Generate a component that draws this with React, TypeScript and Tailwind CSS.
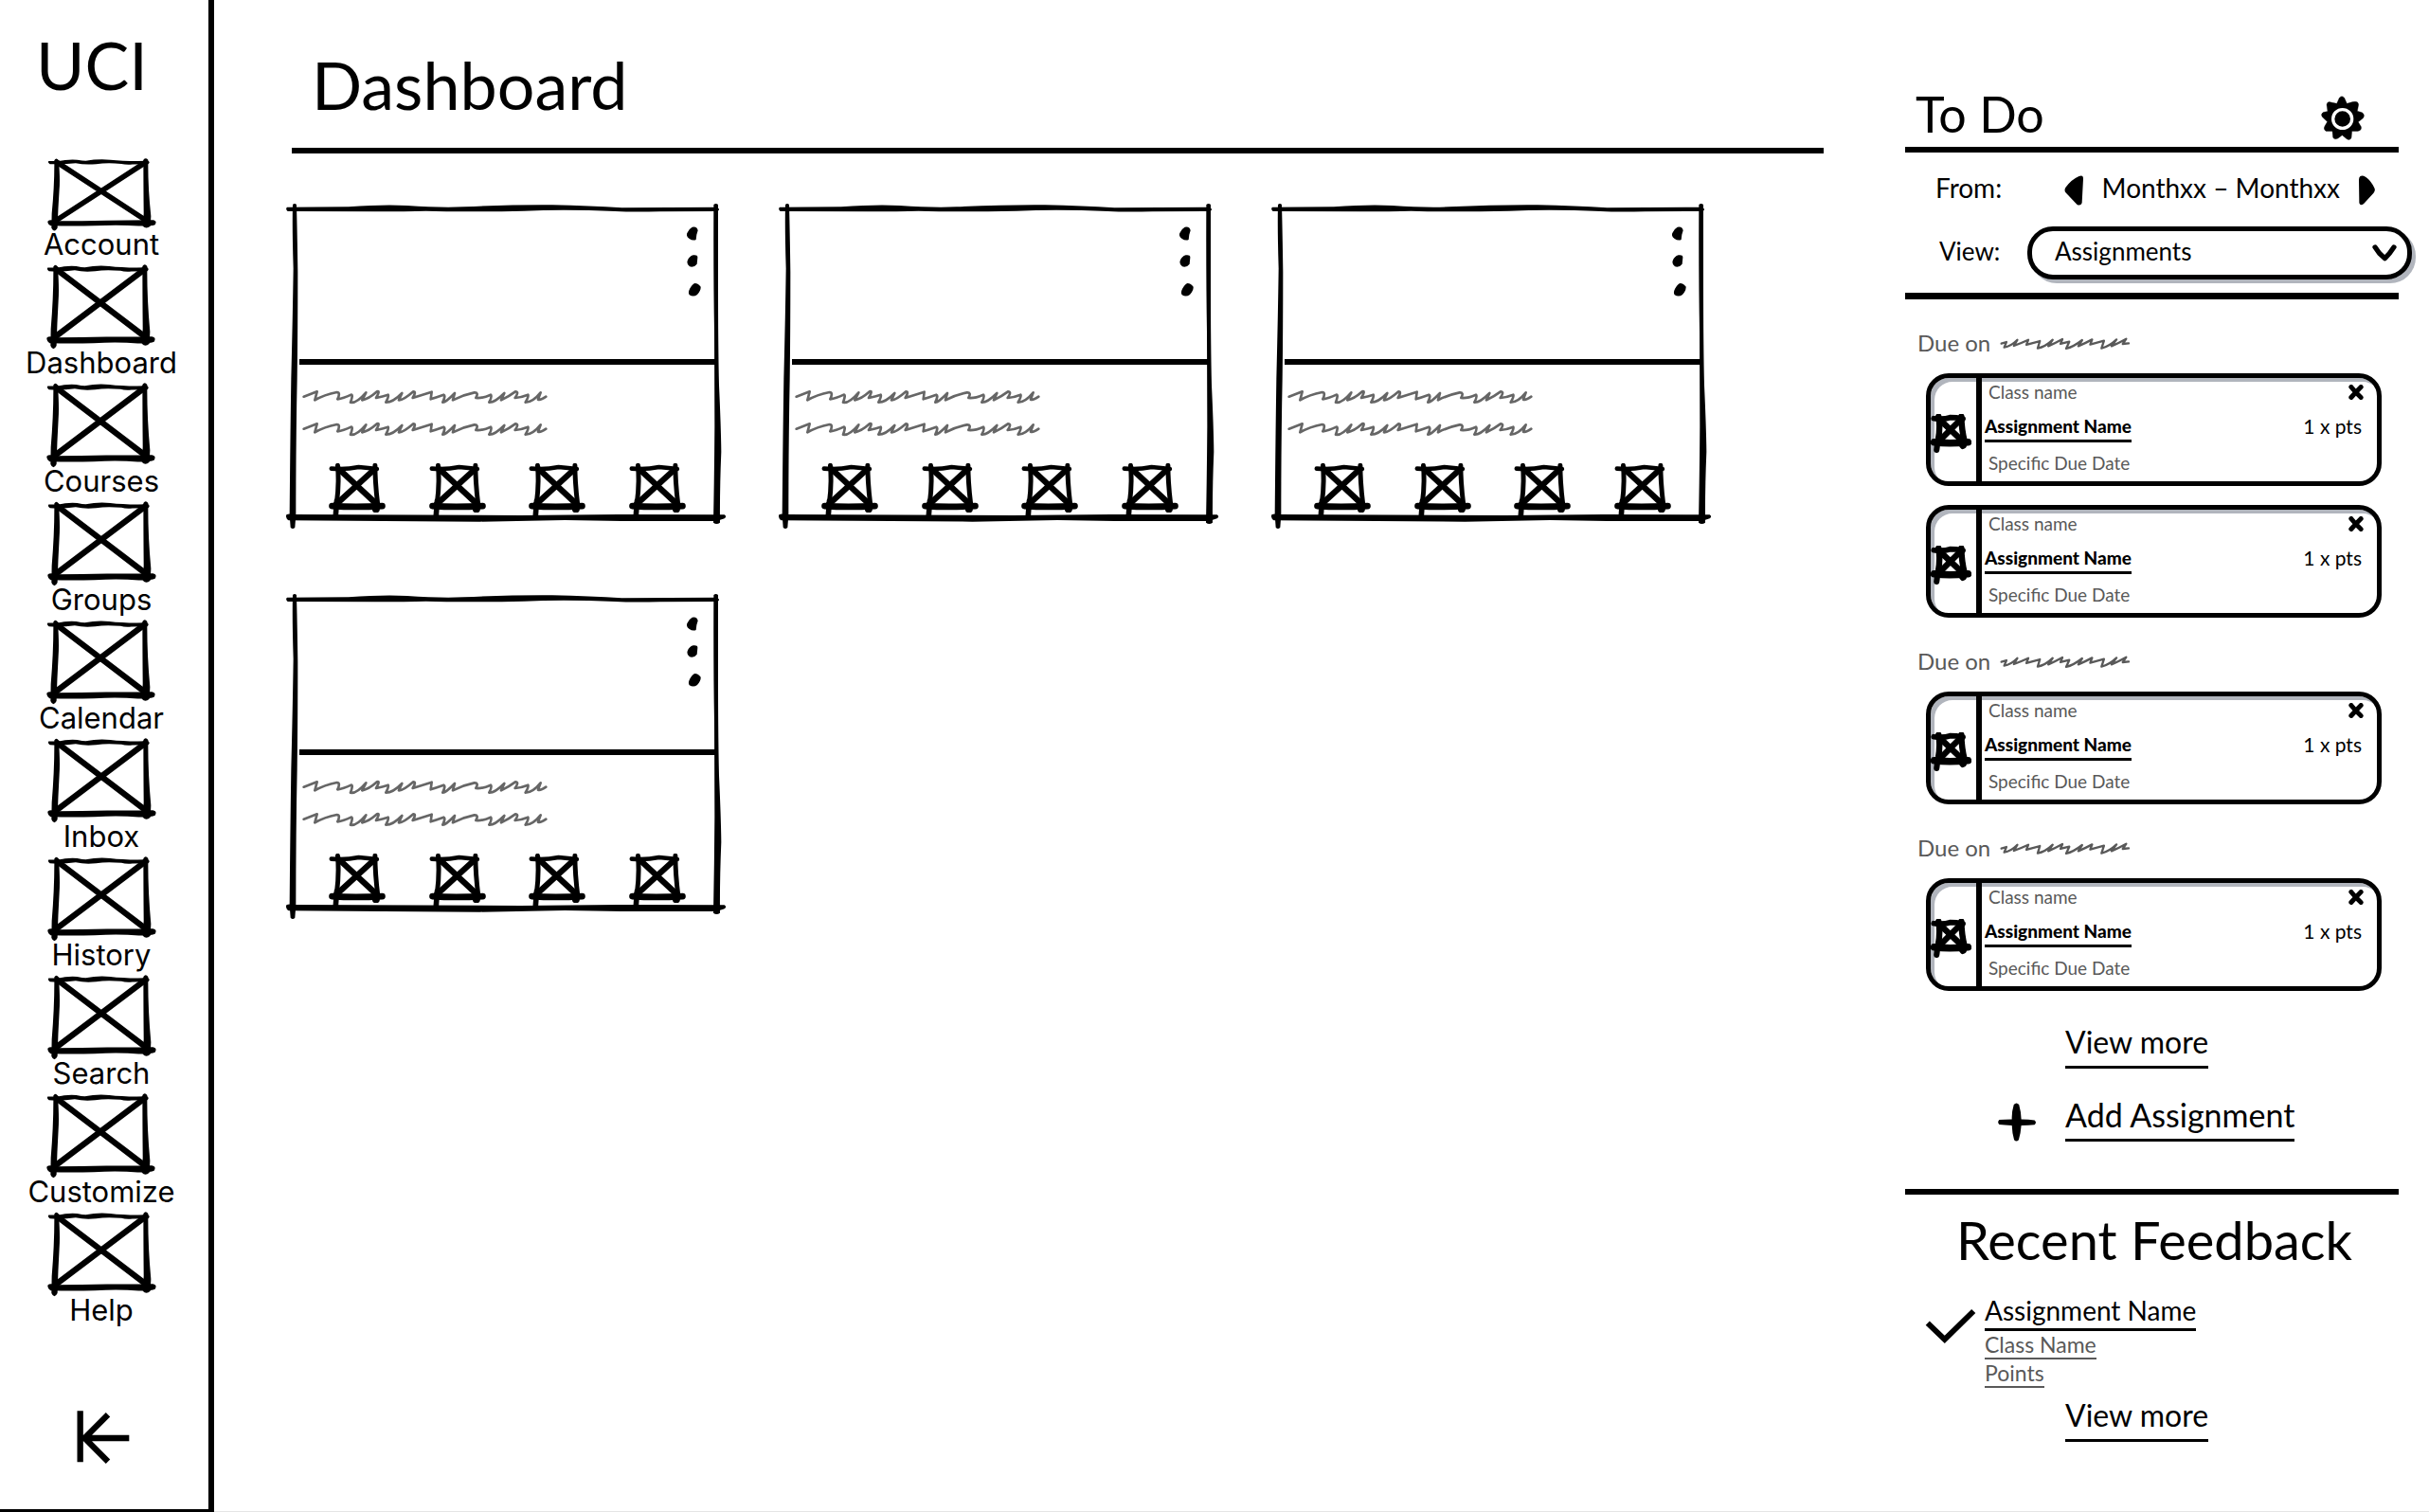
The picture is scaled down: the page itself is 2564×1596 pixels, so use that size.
import React from "react";

const navItems = ["Account", "Dashboard", "Courses", "Groups", "Calendar", "Inbox", "History", "Search", "Customize", "Help"];
const courses = ["Course 1", "Course 2", "Course 3", "Course 4"];
const dueGroups = [
  { id: "a", count: 2 },
  { id: "b", count: 1 },
  { id: "c", count: 1 },
];

function NavSketch({ short }: { short: boolean }) {
  return (
    <svg
      viewBox="150 82 346 278"
      preserveAspectRatio="none"
      className={short ? "h-[78px] w-[115px]" : "h-[91px] w-[115px]"}
      aria-hidden="true"
    >
      <path d="M154 93 L186 93 Q210 86 245 88 Q262 92 272 92 Q310 84 350 88 Q400 94 470 92 Q478 98 470 104 L420 105 Q400 107 385 103 Q340 98 305 104 Q270 108 240 101 Q200 106 158 104 Q150 98 154 93Z" />
      <path d="M172 90 Q178 78 186 90 Q191 160 188 200 Q184 270 182 345 Q172 365 163 345 L164 290 Q173 180 172 90Z" />
      <path d="M455 88 Q462 78 470 88 Q469 190 479 300 L477 338 Q464 350 453 338 L456 290 Q455 180 455 88Z" />
      <path d="M152 318 Q158 312 180 318 Q260 318 340 316 Q400 316 485 315 Q500 318 492 332 Q480 338 440 337 Q380 332 300 336 Q230 338 160 336 Q148 328 152 318Z" />
      <path d="M180 97 L467 319 M463 97 L174 319" stroke="black" strokeWidth="19" fill="none" />
    </svg>
  );
}

function SmallSketch() {
  return (
    <svg viewBox="173 865 180 172" className="h-[57px] w-[60px]" fill="none" stroke="black" strokeLinecap="round" aria-hidden="true">
      <path d="M181 882 Q225 886 268 877 Q300 880 326 883" strokeWidth="14" />
      <path d="M201 872 Q206 930 198 990" strokeWidth="15" />
      <path d="M198 985 L194 1040" strokeWidth="17" />
      <path d="M320 872 Q320 930 329 1000" strokeWidth="15" />
      <path d="M183 1001 Q255 1006 343 1001" strokeWidth="20" />
      <path d="M322 1011 L324 1011" strokeWidth="22" />
      <path d="M208 886 L326 996 M316 886 L196 996" strokeWidth="19" />
    </svg>
  );
}

function TinySketch() {
  return (
    <svg viewBox="0 0 126 121" className="h-[41px] w-[43px]" fill="none" stroke="black" strokeLinecap="round" aria-hidden="true">
      <path d="M9 14 Q40 18 60 11 Q80 11 100 15" strokeWidth="17" />
      <path d="M24 8 Q30 40 23 80" strokeWidth="19" />
      <path d="M22 80 L18 112" strokeWidth="18" />
      <path d="M95 8 Q96 50 105 85" strokeWidth="19" />
      <path d="M10 88 Q55 93 116 88" strokeWidth="22" />
      <path d="M98 95 L100 98" strokeWidth="22" />
      <path d="M32 22 L98 84 M88 22 L26 84" strokeWidth="19" />
    </svg>
  );
}

function CardFrame() {
  return (
    <svg viewBox="37 45 1395 1029" preserveAspectRatio="none" className="pointer-events-none absolute inset-0 h-full w-full" aria-hidden="true">
      <path d="M40 56 L235 55 Q350 46 420 51 Q520 58 600 55 Q750 48 880 49 Q1000 52 1100 58 L1400 56 Q1415 62 1403 69 L1220 70 Q1130 72 1080 69 Q920 62 790 68 Q600 72 480 68 Q420 70 320 70 L42 69 Q34 62 40 56Z" />
      <path d="M58 48 Q64 42 70 48 Q72 120 74 260 Q74 450 72 600 Q68 800 68 1030 L65 1070 Q58 1078 51 1070 L48 1030 Q50 800 53 600 Q58 400 60 250 Q56 120 58 48Z" />
      <path d="M1391 48 Q1398 42 1405 48 L1405 300 Q1405 500 1408 620 Q1414 750 1415 830 Q1410 950 1411 1055 Q1400 1063 1390 1055 Q1393 900 1394 750 L1393 450 Q1390 280 1391 48Z" />
      <path d="M38 1030 Q45 1025 60 1029 L780 1032 L1090 1029 L1425 1030 Q1434 1036 1425 1042 L1400 1050 L1100 1050 L920 1047 L650 1052 L45 1048 Q34 1040 38 1030Z" />
    </svg>
  );
}

function Squiggle() {
  return (
    <svg viewBox="90 633 777 48" className="h-4 w-[259px]" fill="none" stroke="#666666" strokeWidth="8" strokeLinecap="round" strokeLinejoin="round" aria-hidden="true">
      <path d="M95 656 L137 640 L130 667 Q160 650 200 642 Q212 642 202 664 Q220 662 245 650 Q252 650 243 674 Q262 678 292 643 L280 667 Q300 664 327 640 Q338 636 324 660 Q345 655 362 650 Q365 655 355 674 Q378 674 406 645 L396 667 Q410 668 442 640 Q452 640 440 660 L500 641 L497 664 Q515 658 538 650 Q545 652 535 674 Q545 674 573 645 L567 667 Q600 650 635 643 Q650 642 640 660 Q660 662 687 650 Q692 655 682 674 Q700 675 730 645 L720 667 Q745 655 765 640 Q778 640 764 660 Q785 658 805 650 Q808 655 797 674 Q820 674 845 643 L837 665 Q845 668 862 656" />
    </svg>
  );
}

function DateSquiggle() {
  return (
    <svg viewBox="305 830 418 45" className="h-[15px] w-[138px]" fill="none" stroke="#595959" strokeWidth="7" strokeLinecap="round" strokeLinejoin="round" aria-hidden="true">
      <path d="M310 853 L326 848 L319 865 Q340 862 361 841 L350 860 Q372 852 396 841 L390 857 L433 845 L426 868 Q450 864 474 841 L460 861 Q482 852 505 839 L499 854 L527 847 L517 869 Q540 864 568 842 L556 861 Q578 852 600 840 L594 856 L638 844 L630 868 Q655 862 678 840 L662 861 Q684 852 709 838 L698 854 L717 852" />
    </svg>
  );
}

function CourseCard({ name }: { name: string }) {
  return (
    <article aria-label={name} className="relative flex h-[343px] flex-col">
      <CardFrame />
      <div className="flex h-[164px] justify-end pt-6 pr-[27px]">
        <button aria-label={`${name} options`} className="relative h-[74px] w-[15px]">
          <svg viewBox="1305 117 45 222" className="h-[74px] w-[15px]" aria-hidden="true">
            <path d="M1322 119 Q1338 116 1340 130 L1336 143 L1334 159 Q1324 164 1312 155 Q1302 148 1306 138 Q1312 124 1322 119Z" />
            <path d="M1325 208 Q1340 206 1339 216 L1337 236 Q1328 248 1314 244 Q1304 238 1307 226 Q1312 212 1325 208Z" />
            <path d="M1330 297 Q1342 298 1349 308 Q1350 320 1338 333 Q1326 342 1313 334 Q1308 326 1314 315 Q1322 300 1330 297Z" />
          </svg>
        </button>
      </div>
      <hr className="mr-3 ml-[14px] border-0 border-t-[6px] border-black" />
      <div className="flex flex-col gap-[18px] pt-[26px] pl-[17px]">
        <Squiggle />
        <Squiggle />
      </div>
      <div className="mt-auto flex justify-between pr-[43px] pb-3 pl-[45px]">
        {["Announcements", "Tasks", "Discussions", "Files"].map((a) => (
          <button key={a} aria-label={a} className="relative">
            <SmallSketch />
          </button>
        ))}
      </div>
    </article>
  );
}

function AssignmentCard() {
  return (
    <li className="flex h-[119px] w-[481px] overflow-hidden rounded-[24px] border-[5px] border-black shadow-[inset_4px_4px_0_0_#b1b5bd]">
      <div className="flex w-[54px] shrink-0 items-center border-r-[6px] border-black pt-2">
        <TinySketch />
      </div>
      <div className="flex flex-1 flex-col gap-2 pt-px pl-[3px] text-[19px] leading-7">
        <div className="flex items-start justify-between pr-[14px] pl-1">
          <span className="text-[#595959]">Class name</span>
          <button aria-label="Dismiss" className="pt-[6px]">
            <svg viewBox="0 0 45 45" className="h-4 w-4" fill="none" stroke="black" strokeWidth="14" strokeLinecap="round" aria-hidden="true">
              <path d="M8 7 Q20 22 37 38 M37 7 Q24 20 8 38" />
            </svg>
          </button>
        </div>
        <div className="flex items-start justify-between pr-4">
          <a href="#assignment" className="border-b-[3px] border-black font-black">
            Assignment Name
          </a>
          <span className="text-[21px]">1 x pts</span>
        </div>
        <span className="pl-1 text-[#595959]">Specific Due Date</span>
      </div>
    </li>
  );
}

function ViewMore() {
  return (
    <a href="#more" className="border-b-[3px] border-black text-[32px] leading-[50px]">
      View more
    </a>
  );
}

function ToDo() {
  return (
    <section>
      <div className="mr-8 flex items-end justify-between border-b-[6px] border-black pr-9 pb-[7px] pl-[11px]">
        <h2 className="text-[52px] leading-[56px]">To Do</h2>
        <button aria-label="To do settings">
          <svg viewBox="1322 65 138 142" preserveAspectRatio="none" className="h-[47px] w-[46px]" aria-hidden="true">
            <path
              d="M1380 72 Q1388 62 1396 72 L1404 90 L1422 85 Q1440 80 1441 94 L1437 114 L1452 119 Q1463 126 1455 137 L1440 149 L1449 164 Q1452 176 1438 178 L1420 178 L1418 200 Q1411 210 1402 202 L1389 191 L1376 201 Q1364 207 1360 198 L1358 178 L1338 178 Q1328 172 1334 162 L1342 148 L1327 134 Q1319 124 1329 118 L1343 115 L1340 94 Q1342 82 1354 86 L1372 90Z"
              stroke="black"
              strokeWidth="1"
              strokeLinejoin="round"
            />
            <circle cx="1390" cy="139" r="30" fill="black" stroke="white" strokeWidth="10" />
          </svg>
        </button>
      </div>

      <div className="mr-[18px] pt-[19px] pb-[14px]">
        <div className="flex items-start pr-[39px] pl-8 text-[28px] leading-9">
          <span>From:</span>
          <div className="ml-auto flex items-start gap-5">
            <button aria-label="Earlier" className="pt-[5px]">
              <svg viewBox="503 315 59 97" preserveAspectRatio="none" className="h-8 w-5" aria-hidden="true">
                <path d="M549 318 Q562 312 562 326 L558 404 Q554 414 543 409 L508 371 Q501 363 508 353 Q526 328 549 318Z" />
              </svg>
            </button>
            <span>Monthxx – Monthxx</span>
            <button aria-label="Later" className="pt-[5px]">
              <svg viewBox="0 0 46 96" preserveAspectRatio="none" className="h-8 w-[17px]" aria-hidden="true">
                <path d="M4 3 Q10 -1 20 6 Q34 16 44 40 Q48 48 42 56 L14 90 Q4 98 1 88 L0 14 Q0 6 4 3Z" />
              </svg>
            </button>
          </div>
        </div>
        <div className="mt-[22px] flex items-center justify-between pl-9 text-[26px] leading-8">
          <label htmlFor="view" className="pb-1">
            View:
          </label>
          <div className="relative">
            <select
              id="view"
              className="h-14 w-[406px] appearance-none rounded-[27px] border-[5px] border-black bg-white pb-1 pl-6 shadow-[4px_4px_0_0_#b1b5bd]"
            >
              <option>Assignments</option>
            </select>
            <svg viewBox="0 0 68 50" preserveAspectRatio="none" className="pointer-events-none absolute top-[19px] right-4 h-[18px] w-[26px]" fill="none" stroke="black" strokeWidth="14" strokeLinecap="round" strokeLinejoin="round" aria-hidden="true">
              <path d="M8 8 L20 26 L35 41 L48 26 L60 8" />
            </svg>
          </div>
        </div>
      </div>
      <hr className="mr-8 border-0 border-t-[7px] border-black" />

      <div className="flex flex-col gap-[30px] pt-[30px]">
        {dueGroups.map((g) => (
          <div key={g.id}>
            <h3 className="flex items-center gap-[10px] pb-4 pl-[13px] text-[24px] leading-8 text-[#595959]">
              Due on <DateSquiggle />
            </h3>
            <ul className="flex flex-col gap-5 pl-[22px]">
              {Array.from({ length: g.count }, (_, i) => (
                <AssignmentCard key={i} />
              ))}
            </ul>
          </div>
        ))}
      </div>

      <div className="flex flex-col items-start gap-6 pt-[29px] pb-[50px] pl-[169px]">
        <ViewMore />
        <div className="relative flex">
          <svg viewBox="0 0 117 118" className="absolute top-3 -left-[71px] h-[41px] w-10" aria-hidden="true">
            <path d="M49 5 Q57 -4 65 5 Q72 30 72 50 Q95 50 113 53 Q121 60 113 67 Q95 69 72 69 Q70 95 64 114 Q57 121 50 114 Q44 95 43 69 Q20 68 4 66 Q-3 59 4 52 Q20 50 43 50 Q42 28 49 5Z" />
          </svg>
          <a href="#add" className="border-b-[3px] border-black text-[34px] leading-[50px]">
            Add Assignment
          </a>
        </div>
      </div>
    </section>
  );
}

function RecentFeedback() {
  return (
    <section>
      <hr className="mr-8 border-0 border-t-[6px] border-black" />
      <h2 className="pt-4 pl-[54px] text-[56px] leading-[64px]">Recent Feedback</h2>
      <div className="flex items-start pt-6 pl-[21px]">
        <svg viewBox="62 935 156 112" preserveAspectRatio="none" className="mt-4 h-[38px] w-[54px]" fill="none" stroke="black" strokeWidth="17" aria-hidden="true">
          <path d="M70 981 L122 1032 L210 944" />
        </svg>
        <div className="flex flex-col items-start pl-[9px]">
          <a href="#feedback" className="border-b-[3px] border-black text-[28px] leading-[37px]">
            Assignment Name
          </a>
          <a href="#class" className="border-b-2 border-[#595959] text-[23px] leading-7 text-[#595959]">
            Class Name
          </a>
          <a href="#points" className="border-b-2 border-[#595959] text-[23px] leading-7 text-[#595959]">
            Points
          </a>
        </div>
      </div>
      <div className="flex pt-1 pl-[169px]">
        <ViewMore />
      </div>
    </section>
  );
}

export default function App() {
  return (
    <div className="flex min-h-screen border-b border-[#e5e5e5] bg-white font-['Lato',sans-serif] text-black">
      <aside className="-mb-px flex w-[226px] shrink-0 flex-col border-r-[6px] border-b-[3px] border-black pt-9">
        <div className="pl-[38px] text-[70px] leading-[64px]">UCI</div>
        <nav className="flex flex-col items-center gap-1 pt-[67px] pr-[6px] font-['Inter',sans-serif] text-[31px]">
          {navItems.map((item, i) => (
            <a key={item} href={`#${item.toLowerCase()}`} className="flex flex-col items-center">
              <NavSketch short={i === 0} />
              <span className="-mt-1 leading-[34px]">{item}</span>
            </a>
          ))}
        </nav>
        <button aria-label="Collapse menu" className="mt-auto mb-12 ml-[81px] self-start">
          <svg viewBox="243 716 168 168" className="h-14 w-14" fill="none" stroke="black" strokeWidth="19" aria-hidden="true">
            <path d="M254 717 V879 M409 803 H262 M342 729 L268 803 L342 877" />
          </svg>
        </button>
      </aside>

      <main className="flex-1 pt-[53px] pr-[86px] pl-[76px]">
        <h1 className="ml-[6px] border-b-[6px] border-black pb-[31px] pl-[21px] text-[70px] leading-[72px]">Dashboard</h1>
        <div className="grid grid-cols-[repeat(auto-fill,465px)] gap-x-[55px] gap-y-[69px] pt-[53px]">
          {courses.map((c) => (
            <CourseCard key={c} name={c} />
          ))}
        </div>
      </main>

      <div className="w-[553px] shrink-0 pt-[92px]">
        <ToDo />
        <RecentFeedback />
      </div>
    </div>
  );
}
